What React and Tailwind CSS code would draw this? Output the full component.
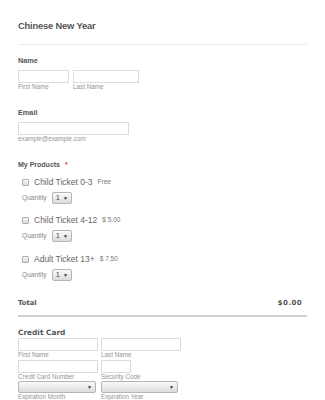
const Select = ({ w = "w-[20px]", value = "" }) => (
  <div
    className={`${w} h-[12px] flex items-center justify-between px-[3px] border border-[#b5b5b5] rounded-[2px] bg-gradient-to-b from-[#fafafa] to-[#dcdcdc] text-[#333]`}
  >
    <span className="text-[6.5px] leading-none">{value}</span>
    <span className="text-[5px] leading-none">▼</span>
  </div>
);

const Input = ({ w }) => (
  <div className={`${w} h-[13px] border border-[#dcdcdc] bg-white`} />
);

const SubLabel = ({ children, w }) => (
  <div className={`${w} h-[8px] leading-[8px] text-[6.3px] text-[#959595]`}>
    {children}
  </div>
);

const products = [
  { name: "Child Ticket 0-3", price: "Free", mt: "mt-[6px]" },
  { name: "Child Ticket 4-12", price: "$ 5.00", mt: "mt-[10px]" },
  { name: "Adult Ticket 13+", price: "$ 7.50", mt: "mt-[11px]" },
];

const App = () => {
  return (
    <div className="w-[325px] h-[400px] overflow-hidden bg-white px-[18px] font-['Liberation_Sans',Arial,sans-serif]">
      <div className="w-[289px]">
        <h1 className="mt-[18px] h-[16px] leading-[16px] text-[9.4px] font-bold text-[#555] tracking-[-0.2px]">
          Chinese New Year
        </h1>
        <div className="mt-[10px] h-px bg-[#ececec]" />

        {/* name */}
        <div className="mt-[11px] h-[10px] leading-[10px] text-[7.3px] font-bold text-[#555]">
          Name
        </div>
        <div className="mt-[4px] flex gap-[4px]">
          <div>
            <Input w="w-[51px]" />
            <SubLabel w="w-[51px]">First Name</SubLabel>
          </div>
          <div>
            <Input w="w-[66px]" />
            <SubLabel w="w-[66px]">Last Name</SubLabel>
          </div>
        </div>

        {/* email */}
        <div className="mt-[17px] h-[10px] leading-[10px] text-[7.3px] font-bold text-[#555]">
          Email
        </div>
        <div className="mt-[4px]">
          <Input w="w-[111px]" />
          <SubLabel w="w-[120px]">example@example.com</SubLabel>
        </div>

        {/* products */}
        <div className="mt-[17px] h-[10px] leading-[10px] text-[7px] font-bold text-[#555] flex">
          My Products
          <span className="ml-[5px] text-[#f23a3c]">*</span>
        </div>
        {products.map((p) => (
          <div key={p.name} className={p.mt}>
            <div className="h-[12px] flex items-center pl-[4px]">
              <div className="w-[7px] h-[7px] rounded-[1px] border border-[#b0b0b0] bg-gradient-to-b from-[#f8f8f8] to-[#dadada]" />
              <span className="ml-[5px] text-[8.5px] text-[#666]">{p.name}</span>
              <span className="ml-[5px] text-[6.5px] text-[#777]">{p.price}</span>
            </div>
            <div className="mt-[4px] h-[12px] flex items-center pl-[4px]">
              <span className="w-[30px] text-[6.6px] text-[#888]">Quantity</span>
              <Select value="1" />
            </div>
          </div>
        ))}

        {/* total */}
        <div className="mt-[16px] h-[12px] flex items-center justify-between pr-[5px] font-['DejaVu_Sans',sans-serif] font-bold text-[#555]">
          <span className="text-[6.8px]">Total</span>
          <span className="text-[7px] tracking-[0.4px]">$0.00</span>
        </div>
        <div className="mt-[6px] h-[2px] bg-[#cfcfcf]" />

        {/* credit card */}
        <div className="mt-[11px] h-[10px] leading-[10px] text-[7.4px] font-bold text-[#555] font-['DejaVu_Sans',sans-serif]">
          Credit Card
        </div>
        <div className="flex gap-[3px]">
          <div>
            <Input w="w-[80px]" />
            <SubLabel w="w-[80px]">First Name</SubLabel>
          </div>
          <div>
            <Input w="w-[80px]" />
            <SubLabel w="w-[80px]">Last Name</SubLabel>
          </div>
        </div>
        <div className="mt-[1px] flex gap-[3px]">
          <div>
            <Input w="w-[80px]" />
            <SubLabel w="w-[80px]">Credit Card Number</SubLabel>
          </div>
          <div>
            <Input w="w-[30px]" />
            <SubLabel w="w-[80px]">Security Code</SubLabel>
          </div>
        </div>
        <div className="flex gap-[5px]">
          <div>
            <Select w="w-[78px]" />
            <SubLabel w="w-[78px]">Expiration Month</SubLabel>
          </div>
          <div>
            <Select w="w-[77px]" />
            <SubLabel w="w-[77px]">Expiration Year</SubLabel>
          </div>
        </div>
      </div>
    </div>
  );
};

export default App;
